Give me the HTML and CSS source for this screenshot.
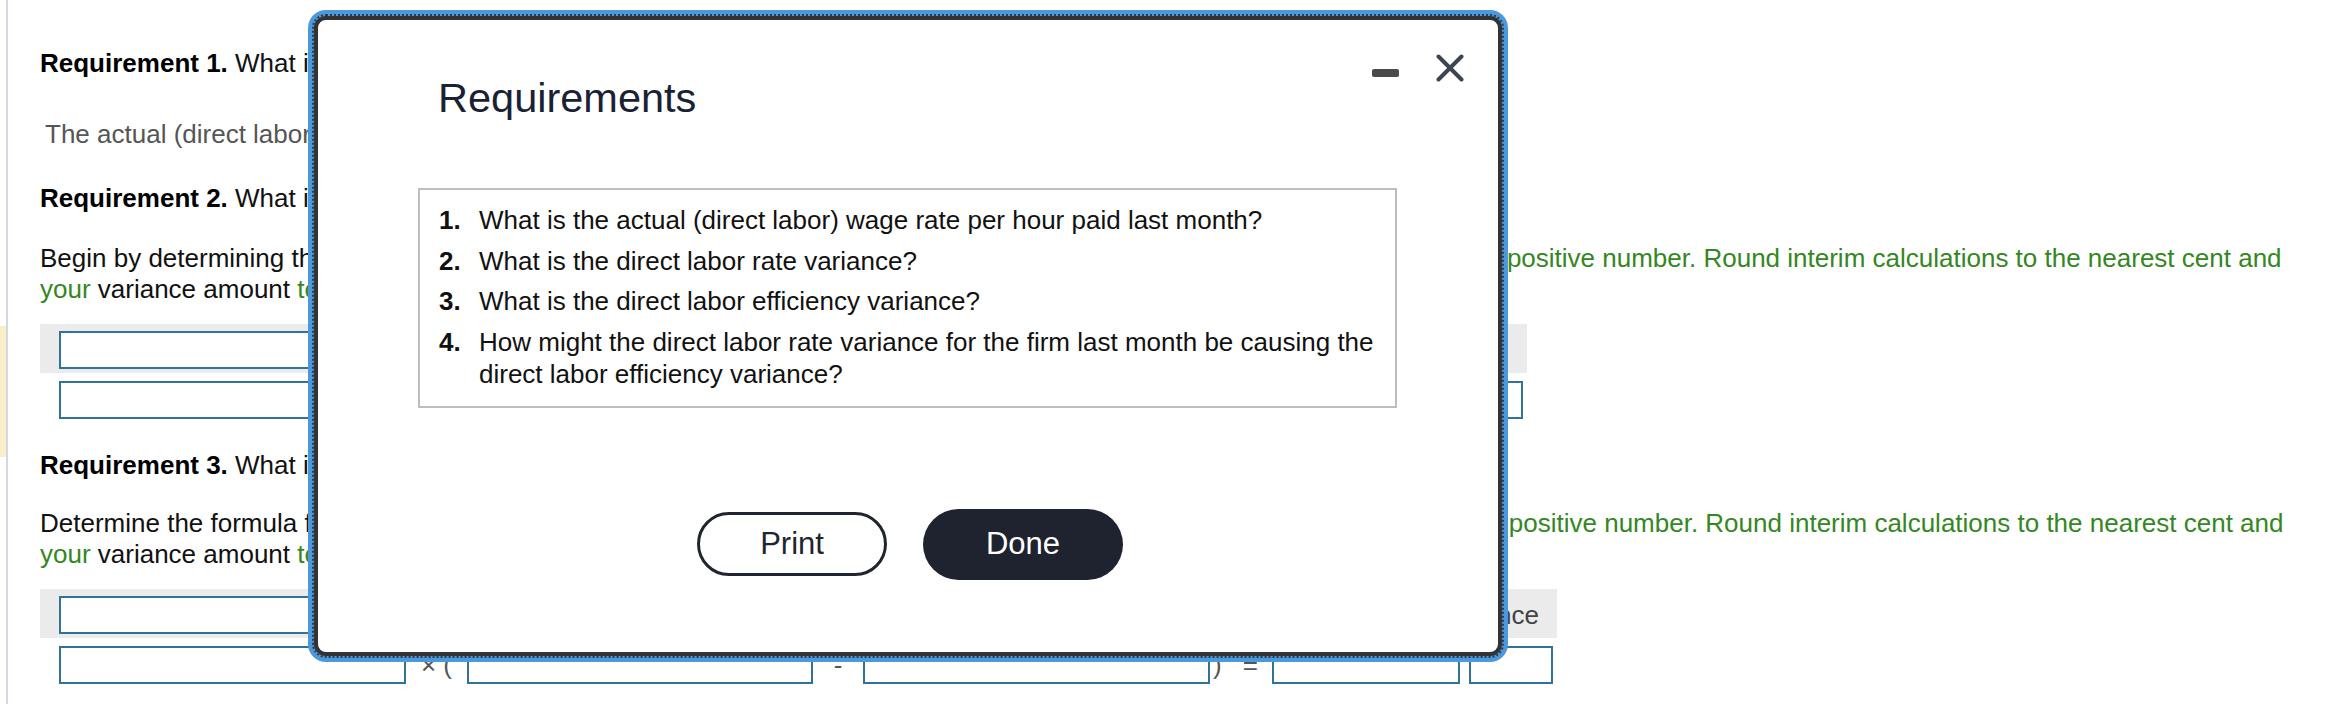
FILE: index.html
```html
<!DOCTYPE html>
<html lang="en">
<head>
<meta charset="utf-8">
<title>Requirements</title>
<link rel="stylesheet" href="styles.css">
</head>
<body>
<div class="page">
  <aside class="rail"><div class="rail-mark"></div></aside>
  <main class="content">
    <p class="req req-first"><b>Requirement 1.</b> What is the actual (direct labor) wage rate per hour paid last month?</p>
    <p class="answer">The actual (direct labor) wage rate per hour paid last month is</p>

    <p class="req req-gap"><b>Requirement 2.</b> What is the direct labor rate variance?</p>
    <p class="instr">Begin by determining the formula for the direct labor rate variance, and then compute its rate variance. <span class="hint">(Enter the variance as a positive number. Round interim calculations to the nearest cent and<br>your</span> variance amount <span class="hint">to the nearest whole dollar. Label the variance as favorable (F) or unfavorable (U).)</span></p>
    <div class="grid-head head-short">
      <span class="field w-a"></span>
    </div>
    <div class="grid-row">
      <span class="field w-a"></span>
      <span class="op op-a">×</span>
      <span class="field w-b"></span>
      <span class="op op-b">=</span>
      <span class="field w-e"></span>
    </div>

    <p class="req req-gap3"><b>Requirement 3.</b> What is the direct labor efficiency variance?</p>
    <p class="instr instr-3">Determine the formula for the direct labor efficiency variance, and then compute its efficiency variance. <span class="hint">(Enter the variance as a positive number. Round interim calculations to the nearest cent and<br>your</span> variance amount <span class="hint">to the nearest whole dollar. Label the variance as favorable (F) or unfavorable (U).)</span></p>
    <div class="grid-head head-long">
      <span class="field w-a"></span>
      <span class="head-label">Efficiency variance</span>
    </div>
    <div class="grid-row">
      <span class="field w-a"></span>
      <span class="op op-a">× (</span>
      <span class="field w-b"></span>
      <span class="op op-b">-</span>
      <span class="field w-a"></span>
      <span class="op op-c"><span>)</span><span>=</span></span>
      <span class="field w-c"></span>
      <span class="field w-d"></span>
    </div>
  </main>
</div>

<div class="modal" role="dialog" aria-label="Requirements">
  <header class="modal-head">
    <h2 class="modal-title">Requirements</h2>
    <div class="modal-controls">
      <span class="ctl-min"></span>
      <svg class="ctl-close" width="28" height="28" viewBox="0 0 28 28" aria-hidden="true">
        <path d="M2.5 2.5 L25.5 25.5 M25.5 2.5 L2.5 25.5" fill="none" stroke="#3e4552" stroke-width="4" stroke-linecap="round"/>
      </svg>
    </div>
  </header>
  <ol class="req-list">
    <li><span class="num">1.</span><span>What is the actual (direct labor) wage rate per hour paid last month?</span></li>
    <li><span class="num">2.</span><span>What is the direct labor rate variance?</span></li>
    <li><span class="num">3.</span><span>What is the direct labor efficiency variance?</span></li>
    <li><span class="num">4.</span><span>How might the direct labor rate variance for the firm last month be causing the direct labor efficiency variance?</span></li>
  </ol>
  <div class="modal-actions">
    <button class="btn btn-print" type="button">Print</button>
    <button class="btn btn-done" type="button">Done</button>
  </div>
</div>
</body>
</html>
```

FILE: styles.css
```css
* { box-sizing: border-box; }

html, body {
  margin: 0;
  padding: 0;
  background: #fff;
}

body {
  position: relative;
  width: 2348px;
  height: 704px;
  overflow: hidden;
  font-family: "Liberation Sans", Arial, Helvetica, sans-serif;
  font-size: 26px;
  line-height: 31px;
  color: #111;
}

.page {
  display: flex;
  min-height: 704px;
}

.rail {
  flex: none;
  width: 8px;
  border-right: 2px solid #d5d8e2;
}

.rail-mark {
  margin-top: 326px;
  width: 6px;
  height: 131px;
  background: #f8eec9;
}

.content {
  flex: 1;
  padding: 48px 0 0 32px;
}

p { margin: 0; }

.req b { font-weight: 700; color: #000; }

.answer {
  margin-top: 40px;
  padding-left: 5px;
  color: #555;
}

.req-gap { margin-top: 33px; }
.req-gap3 { margin-top: 31px; }

.instr { margin-top: 29px; }
.instr-3 { margin-top: 27px; }

.hint { color: #348722; }

.grid-head {
  display: flex;
  align-items: center;
  margin-top: 19px;
  padding: 7px 0 4px 19px;
  background: #ebebeb;
}

.head-short { width: 1487px; }
.head-long { width: 1517px; }

.head-label {
  margin-left: auto;
  padding-right: 18px;
  color: #444;
}

.grid-row {
  display: flex;
  align-items: center;
  margin-top: 8px;
  padding-left: 19px;
}

.field {
  flex: none;
  display: block;
  height: 38px;
  border: 2px solid #2f7396;
  background: #fff;
}

.w-a { width: 347px; }
.w-b { width: 346px; }
.w-c { width: 188px; margin-right: 9px; }
.w-d { width: 84px; }
.w-e { width: 660px; }

.op {
  flex: none;
  display: flex;
  justify-content: center;
  color: #555;
}

.op-a { width: 61px; }
.op-b { width: 50px; }
.op-c {
  width: 62px;
  justify-content: flex-start;
  gap: 21px;
  padding-left: 3px;
}

/* Modal */
.modal {
  position: absolute;
  left: 314px;
  top: 16px;
  width: 1188px;
  height: 640px;
  background: #fff;
  border: 4px solid #333;
  border-radius: 12px;
  outline: 2px dotted #2c3d50;
  box-shadow: 0 0 0 6px #4b98da;
}

.modal-head {
  display: flex;
  align-items: flex-start;
  padding: 34px 34px 0 120px;
}

.modal-title {
  flex: 1;
  margin: 21px 0 0;
  font-size: 41.5px;
  line-height: 46px;
  font-weight: 400;
  color: #1a2135;
}

.modal-controls {
  display: flex;
  align-items: flex-start;
  gap: 37px;
}

.ctl-min {
  display: block;
  width: 27px;
  height: 8px;
  margin-top: 15px;
  border-radius: 2px;
  background: #4a4a4a;
}

.ctl-close { display: block; }

.req-list {
  list-style: none;
  width: 979px;
  margin: 67px 0 0 100px;
  padding: 14px 16px 16px 19px;
  border: 2px solid #bdbdbd;
  color: #111;
}

.req-list li {
  display: grid;
  grid-template-columns: 40px 1fr;
  line-height: 32px;
  margin-bottom: 8.5px;
}

.req-list li:last-child { margin-bottom: 0; }

.num { font-weight: 700; }

.modal-actions {
  display: flex;
  justify-content: center;
  align-items: center;
  gap: 36px;
  margin-top: 101px;
  padding-left: 4px;
}

.btn {
  font-family: inherit;
  font-size: 31px;
  border-radius: 999px;
  cursor: pointer;
  padding: 0;
}

.btn-print {
  width: 190px;
  height: 64px;
  border: 3px solid #1f2430;
  background: #fff;
  color: #1f2430;
}

.btn-done {
  width: 200px;
  height: 71px;
  border: none;
  background: #1f2330;
  color: #fff;
}
```
